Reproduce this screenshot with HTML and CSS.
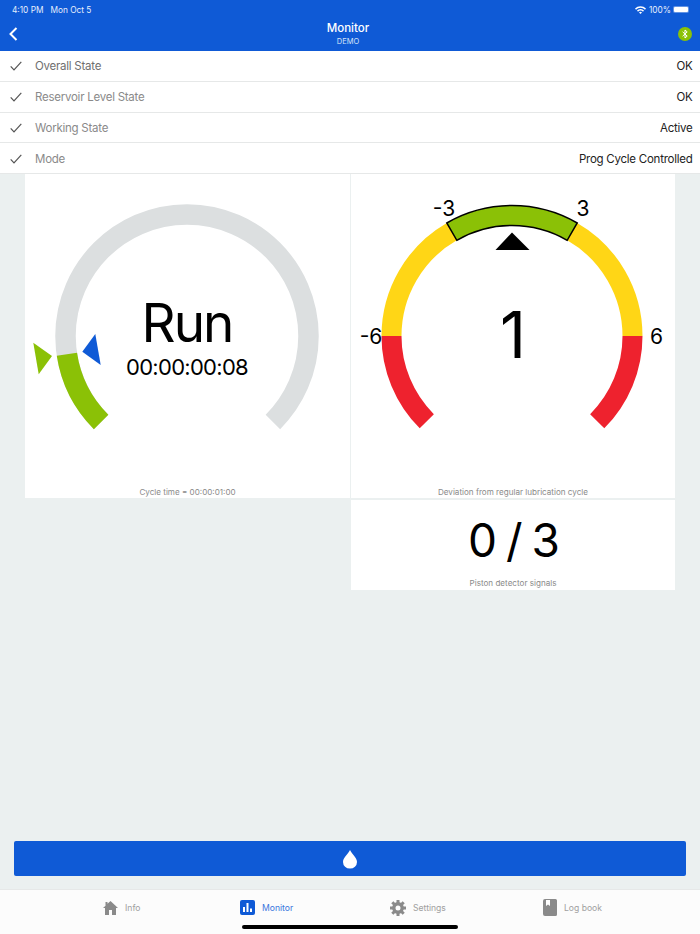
FILE: index.html
```html
<!DOCTYPE html>
<html>
<head>
	<title>Monitor</title>
	<meta charset="utf-8">
	<meta name="viewport" content="width=device-width, initial-scale=1.0">
	<link rel="stylesheet" href="styles.css">
</head>
<body>
	<div class="container">
		<div class="header">
			<div class="status-bar">
				<span class="status-time">4:10 PM</span>
				<span class="status-date">Mon Oct 5</span>
				<svg class="wifi" width="11" height="8" viewBox="0 0 11 8">
					<path d="M0 2.6A7.6 7.6 0 0 1 11 2.6L10 3.7A6.2 6.2 0 0 0 1 3.7Z" fill="#fff"/>
					<path d="M2 4.6A4.8 4.8 0 0 1 9 4.6L8 5.7A3.4 3.4 0 0 0 3 5.7Z" fill="#fff"/>
					<path d="M4 6.6A2.1 2.1 0 0 1 7 6.6L5.5 8Z" fill="#fff"/>
				</svg>
				<span class="status-pct">100%</span>
				<span class="battery"><span class="battery-fill"></span></span>
			</div>
			<div class="nav">
				<svg class="back" width="9" height="14" viewBox="0 0 9 14">
					<path d="M7.5 1L1.5 7L7.5 13" fill="none" stroke="#fff" stroke-width="2"/>
				</svg>
				<div class="nav-title">
					<div class="nav-main">Monitor</div>
					<div class="nav-sub">DEMO</div>
				</div>
				<svg class="bt" width="14" height="14" viewBox="0 0 14 14">
					<circle cx="7" cy="7" r="7" fill="#8bc106"/>
					<path d="M4.6 4.8L9.2 9.1L7 11V3L9.2 4.9L4.6 9.2" fill="none" stroke="#fff" stroke-width="1"/>
				</svg>
			</div>
		</div>

		<div class="rows">
			<div class="row">
				<svg class="check" width="12" height="10" viewBox="0 0 12 10"><path d="M.7 5.4L4 8.8L11.3 .8" fill="none" stroke="#555" stroke-width="1.2"/></svg>
				<span class="row-label first">Overall State</span>
				<span class="row-value">OK</span>
			</div>
			<div class="row">
				<svg class="check" width="12" height="10" viewBox="0 0 12 10"><path d="M.7 5.4L4 8.8L11.3 .8" fill="none" stroke="#555" stroke-width="1.2"/></svg>
				<span class="row-label">Reservoir Level State</span>
				<span class="row-value">OK</span>
			</div>
			<div class="row">
				<svg class="check" width="12" height="10" viewBox="0 0 12 10"><path d="M.7 5.4L4 8.8L11.3 .8" fill="none" stroke="#555" stroke-width="1.2"/></svg>
				<span class="row-label">Working State</span>
				<span class="row-value">Active</span>
			</div>
			<div class="row">
				<svg class="check" width="12" height="10" viewBox="0 0 12 10"><path d="M.7 5.4L4 8.8L11.3 .8" fill="none" stroke="#555" stroke-width="1.2"/></svg>
				<span class="row-label">Mode</span>
				<span class="row-value">Prog Cycle Controlled</span>
			</div>
		</div>

		<div class="main">
			<div class="cards">
				<div class="card">
					<svg class="gauge" width="325" height="312" viewBox="0 0 325 312">
						<path d="M76.1 247.9A121.5 121.5 0 1 1 247.9 247.9" fill="none" stroke="#dcdfe0" stroke-width="20.5"/>
						<path d="M76.1 247.9A121.5 121.5 0 0 1 41.9 180.2" fill="none" stroke="#8bc106" stroke-width="20.5"/>
						<polygon points="8.3,168.7 27,182 13.7,200.3" fill="#8bc106"/>
						<polygon points="57.3,177.7 70.3,160 75.7,191" fill="#0f5ad6"/>
						<text class="gauge-big" x="162" y="168">Run</text>
						<text class="gauge-time" x="162" y="201">00:00:00:08</text>
					</svg>
					<div class="caption">Cycle time = 00:00:01:00</div>
				</div>
				<div class="card">
					<svg class="gauge" width="324" height="312" viewBox="0 0 324 312">
						<path d="M75.8 247.2A120.5 120.5 0 0 1 40.5 162" fill="none" stroke="#ee222e" stroke-width="20"/>
						<path d="M281.5 162A120.5 120.5 0 0 1 246.2 247.2" fill="none" stroke="#ee222e" stroke-width="20"/>
						<path d="M40.5 162A120.5 120.5 0 0 1 100.8 57.6" fill="none" stroke="#ffd616" stroke-width="20"/>
						<path d="M221.2 57.6A120.5 120.5 0 0 1 281.5 162" fill="none" stroke="#ffd616" stroke-width="20"/>
						<path d="M95.8 49A130.5 130.5 0 0 1 226.2 49L216.2 66.3A110.5 110.5 0 0 0 105.8 66.3Z" fill="#8bc106" stroke="#000" stroke-width="1.5"/>
						<polygon points="161,58.5 144.5,76 178.5,76" fill="#000"/>
						<text class="gauge-num" x="93" y="41.5">-3</text>
						<text class="gauge-num" x="232" y="41.5">3</text>
						<text class="gauge-num" x="20" y="170">-6</text>
						<text class="gauge-num" x="305.5" y="170">6</text>
						<text class="gauge-big one" x="161" y="184">1</text>
					</svg>
					<div class="caption">Deviation from regular lubrication cycle</div>
				</div>
				<div class="card pistons">
					<div class="pistons-value">0 / 3</div>
					<div class="caption">Piston detector signals</div>
				</div>
			</div>
		</div>

		<div class="action">
			<svg width="16" height="20" viewBox="0 0 16 20">
				<path d="M8 1C6.5 4.5 1 8.5 1 13A7 6.6 0 0 0 15 13C15 8.5 9.5 4.5 8 1Z" fill="#fff"/>
			</svg>
		</div>

		<div class="tabbar">
			<div class="tabs">
				<div class="tab">
					<svg width="15" height="14" viewBox="0 0 15 14">
						<path d="M7.5 0L15 7H13V14H9V9H6V14H2V7H0L2.5 4.7V1H4.5V2.8Z" fill="#8a8a8a"/>
					</svg>
					<span>Info</span>
				</div>
				<div class="tab active">
					<svg width="15" height="15" viewBox="0 0 15 15">
						<rect width="15" height="15" rx="2" fill="#0f5ad6"/>
						<rect x="3" y="7" width="2" height="5" fill="#fff"/>
						<rect x="6.5" y="3" width="2" height="9" fill="#fff"/>
						<rect x="10" y="8.5" width="2" height="3.5" fill="#fff"/>
					</svg>
					<span>Monitor</span>
				</div>
				<div class="tab">
					<svg width="16" height="16" viewBox="0 0 16 16">
						<circle cx="8" cy="8" r="4.2" fill="none" stroke="#8a8a8a" stroke-width="3.4"/>
						<g stroke="#8a8a8a" stroke-width="3">
							<path d="M8 0V3M8 13V16M0 8H3M13 8H16M2.3 2.3L4.5 4.5M11.5 11.5L13.7 13.7M13.7 2.3L11.5 4.5M4.5 11.5L2.3 13.7"/>
						</g>
					</svg>
					<span>Settings</span>
				</div>
				<div class="tab">
					<svg width="14" height="17" viewBox="0 0 14 17">
						<path d="M2 0H12.5A1.5 1.5 0 0 1 14 1.5V15.5A1.5 1.5 0 0 1 12.5 17H2A2 2 0 0 1 0 15V2A2 2 0 0 1 2 0Z" fill="#8a8a8a"/>
						<path d="M3 1H7V7L5 5.5L3 7Z" fill="#fff"/>
					</svg>
					<span>Log book</span>
				</div>
			</div>
			<div class="home-bar"></div>
		</div>
	</div>
</body>
</html>
```

FILE: styles.css
```css
*,*::after,*::before{
	box-sizing: border-box;
	margin: 0;
	padding: 0;
	font-family: 'Inter', 'Liberation Sans', sans-serif;
}

body{
	background-color: #ebf0f0;
}

.container{
	width: 100%;
	height: 100vh;
	display: flex;
	flex-direction: column;
}

.header{
	height: 51px;
	background-color: #0f5ad6;
	color: white;
}

.status-bar{
	height: 16px;
	padding: 3px 11px 0 12px;
	display: flex;
	align-items: center;
	font-size: 8.3px;
	color: #e6eefc;
}

.status-date{
	margin-left: 7px;
}

.wifi{
	margin-left: auto;
}

.status-pct{
	margin-left: 3px;
}

.battery{
	width: 16px;
	height: 7px;
	margin-left: 2px;
	padding: 1px;
	border-radius: 2px;
	background-color: rgba(255,255,255,0.35);
}

.battery-fill{
	display: block;
	height: 100%;
	border-radius: 1px;
	background-color: white;
}

.nav{
	height: 35px;
	padding: 1px 8px 0 9px;
	display: flex;
	justify-content: space-between;
	align-items: center;
}

.nav-title{
	text-align: center;
}

.nav-main{
	font-size: 11.5px;
	font-weight: 500;
	line-height: 14px;
}

.nav-sub{
	margin-top: 1.5px;
	font-size: 7.5px;
	line-height: 10px;
	color: #d5e2f8;
}

.rows{
	background-color: white;
}

.row{
	height: 30.75px;
	padding: 1px 7.5px 0 10px;
	display: flex;
	align-items: center;
	font-size: 11.5px;
	letter-spacing: -0.25px;
	border-bottom: 1px solid #e6e8e8;
}

.check{
	margin-right: 13px;
}

.row-label{
	color: #8a8a8a;
}

.row-label.first{
	color: #6f6f6f;
}

.row-value{
	margin-left: auto;
	color: #222;
}

.main{
	flex: 1;
	padding: 0 25px;
}

.cards{
	display: grid;
	grid-template-columns: 325px 324px;
	grid-template-rows: 324px 90px;
	column-gap: 1px;
	row-gap: 2px;
}

.card{
	background-color: white;
	text-align: center;
}

.pistons{
	grid-column: 2;
	padding-top: 12px;
}

.gauge{
	display: block;
}

.gauge-big{
	font-size: 53px;
	letter-spacing: -2px;
	text-anchor: middle;
	fill: black;
}

.gauge-big.one{
	font-size: 64px;
}

.gauge-time{
	font-size: 22px;
	letter-spacing: -0.7px;
	text-anchor: middle;
	fill: black;
}

.gauge-num{
	font-size: 21px;
	text-anchor: middle;
	fill: black;
}

.caption{
	font-size: 8.1px;
	line-height: 12px;
	color: #8a8a8a;
}

.pistons-value{
	font-size: 46px;
	letter-spacing: -2px;
	line-height: 56px;
	margin-bottom: 9px;
	color: black;
}

.action{
	height: 35px;
	margin: 0 14px 13px;
	display: flex;
	justify-content: center;
	align-items: center;
	border-radius: 2px;
	background-color: #0f5ad6;
}

.tabbar{
	height: 45px;
	background-color: #fcfcfc;
	border-top: 1px solid #e6e8e8;
}

.tabs{
	height: 35px;
	padding-left: 103px;
	display: grid;
	grid-template-columns: 137px 150px 153px auto;
	align-items: center;
}

.tab{
	display: flex;
	align-items: center;
	gap: 7px;
	font-size: 8.6px;
	color: #a0a0a0;
}

.tab.active{
	color: #3a76dd;
}

.home-bar{
	width: 216px;
	height: 4px;
	margin: 0 auto;
	border-radius: 2px;
	background-color: black;
}
```
